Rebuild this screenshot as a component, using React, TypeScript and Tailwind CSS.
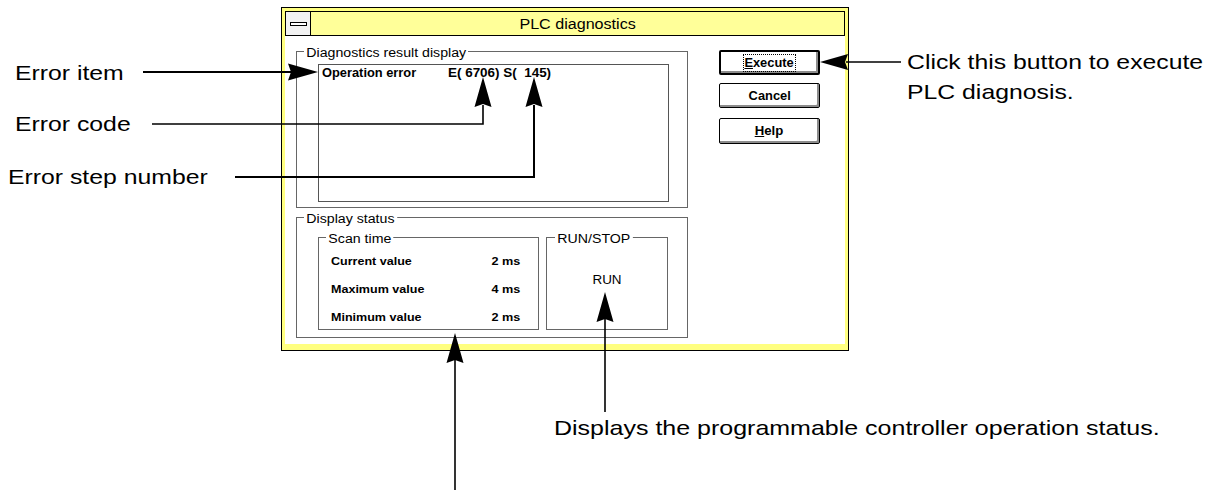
import type { ReactNode } from 'react'

// text in the reference is stretched horizontally, so glyphs are scaled a bit on x
function Legend({ children, className = '' }: { children: ReactNode; className?: string }) {
  return (
    <span className={`absolute top-[-6px] origin-left scale-x-[1.18] whitespace-pre bg-white px-[2px] text-[12px] leading-[14px] ${className}`}>
      {children}
    </span>
  )
}

function Btn({ children, main = false, className = '' }: { children: ReactNode; main?: boolean; className?: string }) {
  return (
    <div
      className={`flex w-[101px] items-center justify-center rounded-[2px] border-black bg-white shadow-[inset_-2px_-2px_0_#8c8c8c] ${main ? 'border-2' : 'border'} ${className}`}
    >
      {children}
    </div>
  )
}

function Row({ label, value }: { label: string; value: string }) {
  return (
    <div className="flex h-[28px] items-start justify-between text-[11.5px] leading-[14px] font-bold">
      <span className="inline-block origin-left scale-x-[1.09] whitespace-pre">{label}</span>
      <span className="inline-block origin-right scale-x-[1.1] whitespace-pre">{value}</span>
    </div>
  )
}

function Dialog() {
  return (
    <div className="flex h-[344px] w-[568px] flex-col border border-black bg-[#ffff80] px-[3px] pt-[3px] pb-[6px]">
      <div className="flex h-[25px] border border-black bg-[#ffff99]">
        <div className="flex w-[25px] items-center justify-center border-r border-black bg-[#f2f2f2]">
          <div className="h-[4px] w-[17px] border border-black bg-white" />
        </div>
        <div className="flex flex-1 items-center justify-center">
          <span className="inline-block scale-x-[1.15] text-[14px] leading-[16px]">PLC diagnostics</span>
        </div>
      </div>

      <div className="flex flex-1 items-start bg-white pl-[11px]">
        <div className="mt-[15px] flex w-[392px] flex-col gap-[9px]">
          <div className="relative h-[157px] border border-[#666] pt-[12px] pl-[21px]">
            <Legend className="left-[7px]">Diagnostics result display</Legend>
            <div className="h-[138px] w-[351px] border border-[#555] pt-[1px] pl-[3px]">
              <div className="flex text-[12px] leading-[14px] font-bold">
                <span className="inline-block w-[126px]">
                  <span className="inline-block origin-left scale-x-[1.07] whitespace-pre">Operation error</span>
                </span>
                <span className="inline-block origin-left scale-x-[1.12] whitespace-pre">E( 6706) S(  145)</span>
              </div>
            </div>
          </div>

          <div className="relative flex h-[121px] gap-[7px] border border-[#666] pt-[19px] pl-[21px]">
            <Legend className="left-[7px]">Display status</Legend>
            <div className="relative h-[93px] w-[221px] border border-[#666] pt-[16px] pr-[18px] pl-[12px]">
              <Legend className="left-[7px]">Scan time</Legend>
              <Row label="Current value" value="2 ms" />
              <Row label="Maximum value" value="4 ms" />
              <Row label="Minimum value" value="2 ms" />
            </div>
            <div className="relative flex h-[93px] w-[122px] justify-center border border-[#666] pt-[35px]">
              <Legend className="left-[8px]">RUN/STOP</Legend>
              <span className="inline-block h-[14px] scale-x-[1.12] text-[12px] leading-[14px]">RUN</span>
            </div>
          </div>
        </div>

        <div className="mt-[14px] ml-[31px] flex flex-col text-[12px] leading-[14px] font-bold">
          <Btn main className="h-[25px]">
            <span className="border border-dotted border-black px-[2px] py-[1px]">
              <span className="inline-block scale-x-[1.07]">
                <span className="underline underline-offset-[1px]">E</span>xecute
              </span>
            </span>
          </Btn>
          <Btn className="mt-[8px] h-[25px]">
            <span className="inline-block scale-x-[1.07]">Cancel</span>
          </Btn>
          <Btn className="mt-[10px] h-[26px]">
            <span className="inline-block scale-x-[1.1]">
              <span className="underline underline-offset-[1px]">H</span>elp
            </span>
          </Btn>
        </div>
      </div>
    </div>
  )
}

const upHead = (x: number, t: number) => `${x},${t} ${x + 8.5},${t + 30} ${x},${t + 27} ${x - 8.5},${t + 30}`

function Callouts() {
  return (
    <svg className="pointer-events-none absolute inset-0" width={1219} height={490} viewBox="0 0 1219 490">
      <g fill="#000" stroke="#000">
        {/* Error item */}
        <line x1={143} y1={72} x2={292} y2={72} strokeWidth={2} />
        <polygon points="318,72 288,63.5 291,72 288,80.5" stroke="none" />
        {/* Error code */}
        <polyline points="152,124 483,124 483,105" fill="none" strokeWidth={1.6} />
        <polygon points={upHead(483, 77)} stroke="none" />
        {/* Error step number */}
        <polyline points="235,177 534,177 534,105" fill="none" strokeWidth={2} />
        <polygon points={upHead(534, 77)} stroke="none" />
        {/* Execute */}
        <line x1={846} y1={62} x2={901} y2={62} strokeWidth={1.6} />
        <polygon points="820,62 848,54 845,62 848,70" stroke="none" />
        {/* RUN */}
        <line x1={605} y1={318} x2={605} y2={412} strokeWidth={1.6} />
        <polygon points={upHead(605, 292)} stroke="none" />
        {/* Scan time */}
        <line x1={455} y1={359} x2={455} y2={490} strokeWidth={1.6} />
        <polygon points={upHead(455, 333)} stroke="none" />
      </g>
    </svg>
  )
}

export default function App() {
  return (
    <div className="relative h-[490px] w-[1219px] overflow-hidden bg-white font-['Liberation_Sans',Arial,sans-serif] text-black">
      <div className="pt-[7px] pl-[281px]">
        <Dialog />
      </div>

      <Callouts />

      <div className="absolute top-[61px] left-[15px] origin-left scale-x-[1.18] text-[21px] leading-[24px] whitespace-pre">Error item</div>
      <div className="absolute top-[112px] left-[15px] origin-left scale-x-[1.18] text-[21px] leading-[24px] whitespace-pre">Error code</div>
      <div className="absolute top-[165px] left-[8px] origin-left scale-x-[1.18] text-[21px] leading-[24px] whitespace-pre">Error step number</div>
      <div className="absolute top-[47px] left-[907px] origin-left scale-x-[1.18] text-[21px] leading-[30px] whitespace-pre">
        Click this button to execute
        <br />
        PLC diagnosis.
      </div>
      <div className="absolute top-[416px] left-[554px] origin-left scale-x-[1.19] text-[21px] leading-[24px] whitespace-pre">
        Displays the programmable controller operation status.
      </div>
    </div>
  )
}
